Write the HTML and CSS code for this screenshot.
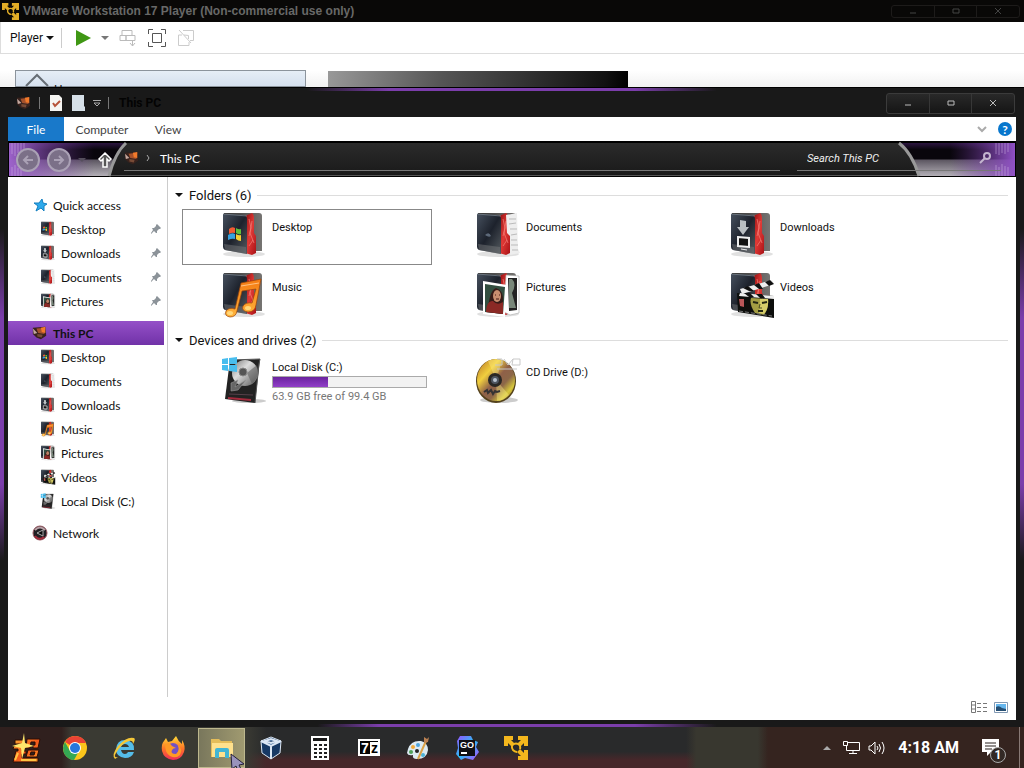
FILE: index.html
```html
<!DOCTYPE html>
<html lang="en">
  <head>
    <meta charset="utf-8">
    <title>This PC</title>
    <meta name="viewport" content="width=device-width, initial-scale=1">
    <link rel="stylesheet" href="styles.css">
  </head>
  <body>
    <!-- shared icons -->
    <svg class="sprite" width="0" height="0" aria-hidden="true">
      <defs>
        <linearGradient id="cover" x1="0" y1="0" x2="1" y2="1">
          <stop offset="0" stop-color="#46505e"/><stop offset=".5" stop-color="#1d222c"/><stop offset="1" stop-color="#555b60"/>
        </linearGradient>
        <linearGradient id="back"><stop offset="0" stop-color="#333"/><stop offset="1" stop-color="#767472"/></linearGradient>
        <linearGradient id="red" x1="0" y1="0" x2="1" y2="1">
          <stop offset="0" stop-color="#8e0e10"/><stop offset=".5" stop-color="#e03a36"/><stop offset="1" stop-color="#a81116"/>
        </linearGradient>
        <linearGradient id="gold" x1="0" y1="0" x2="0" y2="1"><stop offset="0" stop-color="#f47a12"/><stop offset="1" stop-color="#ffb53c"/></linearGradient>
        <linearGradient id="disc" x1="0" y1="0" x2="1" y2="1">
          <stop offset="0" stop-color="#b36c24"/><stop offset=".3" stop-color="#f1cf3e"/><stop offset=".5" stop-color="#8f6048"/><stop offset=".65" stop-color="#8c6748"/><stop offset=".8" stop-color="#d6c73c"/><stop offset="1" stop-color="#8c571d"/>
        </linearGradient>
        <linearGradient id="metal" x1="0" y1="0" x2="1" y2="1"><stop offset="0" stop-color="#777"/><stop offset=".4" stop-color="#ddd"/><stop offset="1" stop-color="#555"/></linearGradient>
        <linearGradient id="silver" x1="0" y1="0" x2="0" y2="1"><stop offset="0" stop-color="#2c1540"/><stop offset=".2" stop-color="#09060c"/><stop offset=".48" stop-color="#09060c"/><stop offset=".52" stop-color="#5d5762"/><stop offset="1" stop-color="#b4b0b7"/></linearGradient>
        <linearGradient id="violetL"><stop offset="0" stop-color="#9d62cb"/><stop offset="1" stop-color="#6b3397" stop-opacity="0"/></linearGradient>
        <linearGradient id="violetR"><stop offset="0" stop-color="#6b3397" stop-opacity="0"/><stop offset="1" stop-color="#8f50c4"/></linearGradient>
        <linearGradient id="fire" x1="0" y1="0" x2="0" y2="1"><stop offset="0" stop-color="#ffdc38"/><stop offset=".5" stop-color="#ff7a26"/><stop offset="1" stop-color="#ef2d58"/></linearGradient>
        <linearGradient id="go" x1="0" y1="0" x2="1" y2="1"><stop offset="0" stop-color="#9b4dff"/><stop offset=".5" stop-color="#2bbdf5"/><stop offset="1" stop-color="#b548ff"/></linearGradient>
        <linearGradient id="ember" x1="0" y1="0" x2="1" y2="1"><stop offset="0" stop-color="#ffae35"/><stop offset=".5" stop-color="#f4591b"/><stop offset="1" stop-color="#ff9d2b"/></linearGradient>
      </defs>

      <symbol id="folder" viewBox="0 0 46 48">
        <ellipse cx="23" cy="43" rx="21" ry="3" fill="#999" opacity=".3"/>
        <path d="M3 2L38 2Q41 2 41 5V40L30 40L3 36z" fill="url(#back)"/>
        <path d="M24 5L31 2Q33 3 33 8V22L35 25V42L31 44L24 42z" fill="url(#red)"/>
        <path d="M28 8L30 17L28 25M31 10L29 22L33 32M28 35L32 29" fill="none" stroke="#f57f78" stroke-width=".7"/>
        <path d="M2 3L23 4Q26 5 26 8V43L4 39Q2 38 2 36z" fill="url(#cover)"/>
        <path d="M2 3L26 5" stroke="#76808a" stroke-width=".8"/>
        <path d="M3 33L25 36V43L4 39z" fill="#737577" opacity=".5"/>
      </symbol>
      <symbol id="desktop" viewBox="0 0 46 48">
        <use href="#folder"/>
        <path d="M8 18Q11 15 14 17V22Q11 21 8 23z" fill="#f15b32"/><path d="M15 17Q18 19 20 18V23Q18 24 15 22z" fill="#5ebe3b"/>
        <path d="M7 24Q11 21 14 23V28Q11 27 7 29z" fill="#35a2df"/><path d="M15 23Q18 25 20 24V30Q17 30 15 28z" fill="#f5cf32"/>
      </symbol>
      <symbol id="documents" viewBox="0 0 46 48">
        <use href="#folder"/>
        <path d="M31 4L42 2L43 38L45 42L35 44V25L32 22z" fill="#eee"/>
        <path d="M34 8H41M34 13L41 12M35 18H42M36 24L42 23M36 29H42M36 34H43M37 39H43" stroke="#bbb"/>
        <path d="M10 24Q14 20 16 25Q14 27 10 24" fill="#5d6979"/>
      </symbol>
      <symbol id="downloads" viewBox="0 0 46 48">
        <use href="#folder"/>
        <path d="M11 9L17 10V16H20L14 24L8 16H11z" fill="#b9bec1"/>
        <path d="M9 26L20 27V36L9 35z" fill="#111" stroke="#eee" stroke-width="2"/><path d="M12 38L18 39" stroke="#eee"/>
      </symbol>
      <symbol id="music" viewBox="0 0 46 48">
        <use href="#folder"/>
        <path d="M20 12L40 8L35 34Q34 41 27 41Q20 40 22 35Q25 31 31 32L35 18L21 20L16 40Q15 46 9 46Q3 45 5 40Q8 36 14 38z" fill="url(#gold)" stroke="#9b430a" stroke-width=".7"/>
        <path d="M20 15L38 12" stroke="#ffc184"/><ellipse cx="9" cy="42" rx="3" ry="2" fill="#ffd77a"/><ellipse cx="27" cy="37" rx="3" ry="2" fill="#ffd77a"/>
      </symbol>
      <symbol id="pictures" viewBox="0 0 46 48">
        <use href="#folder"/>
        <path d="M31 4L44 5V42L35 44L29 41z" fill="#fff" stroke="#aaa" stroke-width=".6"/><path d="M33 7H42V39L34 40z" fill="#222"/><path d="M37 8Q42 13 37 22L41 37H34V8z" fill="#788779"/>
        <path d="M8 10L32 14L30 46L8 43z" fill="#fff"/><path d="M10 13L30 16L28 43L10 41z" fill="#324e40"/>
        <path d="M13 40Q14 20 21 17Q29 19 28 32L28 43L11 41z" fill="#371b18"/><ellipse cx="22" cy="25" rx="4" ry="6" fill="#c98e70"/><path d="M11 40Q12 29 18 30Q22 35 28 31V43L11 41z" fill="#8b2925"/><path d="M20 24H21M24 24H25M21 28H24" stroke="#451915"/>
      </symbol>
      <symbol id="videos" viewBox="0 0 46 48">
        <use href="#folder"/>
        <path d="M8 22L45 25V47L9 41z" fill="#0d0e0c"/><path d="M11 18L43 9L45 13L13 23z" fill="#eee"/><path d="M14 17L20 20H25L19 15zM25 14L30 18H34L30 12zM36 11L40 15L45 13L41 9z" fill="#111"/>
        <path d="M11 22L45 25V28L10 25z" fill="#eee"/><path d="M15 22L20 26H25L21 22zM27 23L31 27H36L33 23z" fill="#111"/>
        <path d="M22 27L39 28Q40 37 35 44L26 42Q20 33 22 27" fill="#a39d43"/><path d="M31 28L39 28Q40 37 35 43L30 42z" fill="#d6cd6a"/><path d="M24 31L29 32M33 32L38 31M29 40H34" stroke="#242713" stroke-width="2"/><path d="M31 33L30 37H33" fill="none" stroke="#4b4a20"/><path d="M10 28H15V36L11 35z" fill="#b95658"/><path d="M10 40L43 45" stroke="#777" stroke-dasharray="4 2"/>
      </symbol>
      <symbol id="drive" viewBox="0 0 46 48">
        <ellipse cx="28" cy="45" rx="17" ry="2" fill="#999" opacity=".5"/>
        <path d="M9 4L39 3L34 47L4 43z" fill="#222"/><path d="M9 4L39 3L38 8L34 47" fill="none" stroke="#555"/>
        <circle cx="24" cy="17" r="13" fill="url(#metal)"/><circle cx="22" cy="16" r="4" fill="#555" stroke="#888"/><path d="M26 17L36 9Q40 19 31 28z" fill="#555" opacity=".5"/>
        <path d="M10 27L17 24L14 31L25 24L17 34L10 35z" fill="#666" stroke="#999" stroke-width=".6"/><path d="M8 38L32 39" stroke="#55404a"/><path d="M7 42L30 44" stroke="#a32a3c" stroke-width="2"/>
        <path d="M1 3L7 2V8H1zM8 2L16 1V8H8zM1 9H7V15L1 14zM8 9H16V16L8 15z" fill="#48bdee"/>
      </symbol>
      <symbol id="cd" viewBox="0 0 46 48">
        <ellipse cx="24" cy="44" rx="19" ry="3" fill="#999" opacity=".5"/>
        <ellipse cx="21" cy="25" rx="20" ry="22" fill="#54421c"/><ellipse cx="21" cy="24" rx="19" ry="21" fill="url(#disc)"/>
        <path d="M21 24L13 5Q21 1 27 5zM21 24L34 39Q29 45 22 45z" fill="#fff087" opacity=".4"/>
        <circle cx="20" cy="24" r="7" fill="#292724"/><circle cx="20" cy="24" r="4" fill="#4d5560"/><circle cx="20" cy="24" r="2" fill="#b8c3cf"/>
        <path d="M9 36L12 34L13 37L16 34L18 38L20 35L22 36L25 35" fill="none" stroke="#333" stroke-width="2"/>
        <path d="M22 3H27V9H20M29 3L33 9L38 3M38 3H45V9H37zM22 13H42" fill="none" stroke="#c9c9c9"/>
      </symbol>
      <symbol id="pc" viewBox="0 0 18 16">
        <path d="M1 2L15 1L16 11L10 15L5 13L1 9z" fill="#38221d"/><path d="M5 3L15 2L14 9L7 8z" fill="#a6522c"/><path d="M10 2L15 1V8L11 7z" fill="#f17a2b"/><path d="M1 3L6 8L2 9z" fill="#c4a9a0"/><path d="M6 9L12 10L11 13L6 12z" fill="#784b36"/>
      </symbol>
      <symbol id="pin" viewBox="0 0 12 12"><path d="M7 1L11 5L10 6L9 6L7 8V10L6 10L4 8L1 11L1 10L3 7L2 5H4L6 3L6 2z" fill="#8c9399"/></symbol>
      <symbol id="vmware" viewBox="0 0 24 24">
        <path d="M0 0H9V4H7L11 8L8 11L4 7V10H0zM14 0H24V10H20V7L16 11L13 8L17 4H14zM24 14V24H14V20H17L13 16L16 13L20 17V14z" fill="currentColor"/>
        <path d="M8 10A5 5 0 0 0 13 16M16 13A5 5 0 0 0 16 10M10 8A5 5 0 0 1 14 8" fill="none" stroke="currentColor" stroke-width="2"/>
      </symbol>
    </svg>

    <section class="vm">
      <header class="vm-title">
        <svg class="vm-logo" viewBox="0 0 24 24"><use href="#vmware"/></svg>
        <h1>VMware Workstation 17 Player (Non-commercial use only)</h1>
        <div class="controls dim">
          <button aria-label="Minimize"><svg viewBox="0 0 10 10"><path d="M2 7H8"/></svg></button>
          <button aria-label="Maximize"><svg viewBox="0 0 10 10"><path d="M2 3H8V7H2z"/></svg></button>
          <button aria-label="Close"><svg viewBox="0 0 10 10"><path d="M2 2L8 8M8 2L2 8"/></svg></button>
        </div>
      </header>
      <nav class="vm-tools">
        <button class="player">Player <i class="caret"></i></button>
        <button class="play" aria-label="Play"><svg width="16" height="16" viewBox="0 0 16 16"><path d="M1 0L16 8L1 16z" fill="#3f9714"/></svg></button>
        <button class="more" aria-label="Power options"><i class="caret grey"></i></button>
        <button aria-label="Send keys"><svg width="18" height="18" viewBox="0 0 18 18" fill="none" stroke="#bbb"><path d="M3 1.500H13V6.500H3zM1 6.500H7V11.500H1zM7 6.500H16V11.500H7zM13.500 11V17M11 14L13.500 17L16 14"/></svg></button>
        <button aria-label="Full screen"><svg width="20" height="20" viewBox="0 0 20 20" fill="none" stroke="#555"><path d="M1.500 6V1.500H6M14 1.500H18.500V6M18.500 14V18.500H14M6 18.500H1.500V14M5.500 5.500H14.500V14.500H5.500z"/></svg></button>
        <button aria-label="Unity"><svg width="18" height="18" viewBox="0 0 18 18" fill="none" stroke="#ccc"><path d="M6 1.500H16.500V11.500H13M1.500 6V16.500H12V13M1.500 6H5M2 1L14 14M7 6L11.500 6.500V10"/></svg></button>
      </nav>
      <div class="vm-body">
        <div class="vm-home"><svg width="24" height="16" viewBox="0 0 24 16"><path d="M1 15L12 4L23 15" fill="none" stroke="#666d74" stroke-width="2"/></svg><span>Home</span></div>
        <div class="vm-banner"></div>
      </div>
    </section>

    <main class="explorer">
      <header class="titlebar">
        <svg class="pc" viewBox="0 0 18 16"><use href="#pc"/></svg>
        <i class="sep"></i>
        <button aria-label="Properties"><svg width="12" height="16" viewBox="0 0 12 16"><path d="M0 0H9L12 3V16H0z" fill="#f5f5f2"/><path d="M3 8L5 11L10 6" fill="none" stroke="#b65238" stroke-width="2"/></svg></button>
        <button class="new" aria-label="New folder"><svg width="13" height="16" viewBox="0 0 13 16"><path d="M0 0H12V11L13 12V16H0z" fill="#d6e0e8"/></svg></button>
        <button class="custom" aria-label="Customize"><svg width="8" height="8" viewBox="0 0 8 8"><path d="M0 1.500H8M1 4L4 7L7 4z" fill="none" stroke="#aaa"/></svg></button>
        <i class="sep"></i>
        <h2>This PC</h2>
        <div class="controls">
          <button aria-label="Minimize"><svg viewBox="0 0 10 10"><path d="M2 7H8"/></svg></button>
          <button aria-label="Maximize"><svg viewBox="0 0 10 10"><path d="M2 3H8V7H2z"/></svg></button>
          <button aria-label="Close"><svg viewBox="0 0 10 10"><path d="M2 2L8 8M8 2L2 8"/></svg></button>
        </div>
      </header>

      <nav class="tabs">
        <button class="file">File</button>
        <button class="computer">Computer</button>
        <button class="view">View</button>
        <button class="expand" aria-label="Expand ribbon"><svg width="10" height="6" viewBox="0 0 10 6"><path d="M1 1L5 5L9 1" fill="none" stroke="#aaa" stroke-width="2"/></svg></button>
        <button class="help" aria-label="Help">?</button>
      </nav>

      <div class="address">
        <svg class="deco" width="120" height="33" viewBox="0 0 120 33" aria-hidden="true">
          <path d="M0 0H117Q106 11 100 33H0z" fill="url(#silver)"/><path d="M0 0H85V33H0z" fill="url(#violetL)"/>
          <path d="M3 0V11M6 0V13M9 0V10M12 0V12M15 0V8M3 24V33M6 22V33M9 25V33M12 23V33" stroke="#d1b5e6" opacity=".5"/>
          <path d="M117 0Q106 10 100 33" fill="none" stroke="#999" stroke-width="3"/>
        </svg>
        <svg class="deco right" width="120" height="33" viewBox="0 0 120 33" aria-hidden="true">
          <path d="M4 0H120V33H24Q18 11 4 0z" fill="url(#silver)"/><path d="M55 0H120V33H55z" fill="url(#violetR)"/>
          <path d="M101 0V11M104 0V12M107 0V10M110 0V11M113 0V9M101 22V33M104 24V33M107 21V33M110 23V33M113 24V33" stroke="#d1b5e6" opacity=".5"/>
          <path d="M4 0Q17 10 24 33" fill="none" stroke="#999" stroke-width="3"/>
        </svg>
        <button class="orb" aria-label="Back"><svg width="12" height="12" viewBox="0 0 12 12"><path d="M11 6H2M6 2L2 6L6 10" fill="none" stroke="#aaa1b5" stroke-width="2"/></svg></button>
        <button class="orb" aria-label="Forward"><svg width="12" height="12" viewBox="0 0 12 12"><path d="M1 6H10M6 2L10 6L6 10" fill="none" stroke="#aaa1b5" stroke-width="2"/></svg></button>
        <button class="recent" aria-label="Recent locations"><i class="caret"></i></button>
        <button class="up" aria-label="Up"><svg width="14" height="16" viewBox="0 0 14 16"><path d="M7 1L13 7L11 9L9 7V15H5V7L3 9L1 7z" fill="#555" stroke="#fff" stroke-width="1.500"/></svg></button>
        <div class="path">
          <svg class="pc" viewBox="0 0 18 16"><use href="#pc"/></svg>
          <svg width="4" height="6" viewBox="0 0 4 6"><path d="M1 0L3 3L1 6" fill="none" stroke="#aaa"/></svg>
          <a href="#">This PC</a>
        </div>
        <label class="search">
          <input type="text" placeholder="Search This PC" aria-label="Search This PC">
          <svg width="12" height="12" viewBox="0 0 12 12" fill="none" stroke="#c4b5cf" stroke-width="2"><circle cx="8" cy="4" r="3"/><path d="M6 6L1 11"/></svg>
        </label>
      </div>

      <div class="pane">
        <aside class="tree">
          <a href="#" class="root"><svg viewBox="0 0 16 16"><path d="M10 2L11 6L15 7L12 9L12 14L9 11L4 14L6 9L2 6L7 6z" fill="#2da9eb" stroke="#1680c0"/></svg>Quick access</a>
          <a href="#"><svg viewBox="0 0 46 48"><use href="#desktop"/></svg>Desktop<svg class="pin" viewBox="0 0 12 12"><use href="#pin"/></svg></a>
          <a href="#"><svg viewBox="0 0 46 48"><use href="#downloads"/></svg>Downloads<svg class="pin" viewBox="0 0 12 12"><use href="#pin"/></svg></a>
          <a href="#"><svg viewBox="0 0 46 48"><use href="#documents"/></svg>Documents<svg class="pin" viewBox="0 0 12 12"><use href="#pin"/></svg></a>
          <a href="#"><svg viewBox="0 0 46 48"><use href="#pictures"/></svg>Pictures<svg class="pin" viewBox="0 0 12 12"><use href="#pin"/></svg></a>
          <a href="#" class="root group active"><svg viewBox="0 0 18 16"><use href="#pc"/></svg>This PC</a>
          <a href="#"><svg viewBox="0 0 46 48"><use href="#desktop"/></svg>Desktop</a>
          <a href="#"><svg viewBox="0 0 46 48"><use href="#documents"/></svg>Documents</a>
          <a href="#"><svg viewBox="0 0 46 48"><use href="#downloads"/></svg>Downloads</a>
          <a href="#"><svg viewBox="0 0 46 48"><use href="#music"/></svg>Music</a>
          <a href="#"><svg viewBox="0 0 46 48"><use href="#pictures"/></svg>Pictures</a>
          <a href="#"><svg viewBox="0 0 46 48"><use href="#videos"/></svg>Videos</a>
          <a href="#"><svg viewBox="0 0 46 48"><use href="#drive"/></svg>Local Disk (C:)</a>
          <a href="#" class="root group"><svg viewBox="0 0 16 16"><circle cx="8" cy="8" r="7" fill="#211f23" stroke="#98565f"/><path d="M3 5Q8 0 13 5" fill="none" stroke="#b8a0a6" stroke-width="2"/><path d="M5 8L11 5V11z" fill="#09090a" stroke="#aaa"/><path d="M3 11Q7 16 12 12" fill="none" stroke="#a72a3a" stroke-width="2"/></svg>Network</a>
        </aside>

        <section class="files">
          <h3><i class="caret"></i>Folders (6)</h3>
          <div class="grid">
            <a href="#" class="tile selected"><svg viewBox="0 0 46 48"><use href="#desktop"/></svg><span>Desktop</span></a>
            <a href="#" class="tile"><svg viewBox="0 0 46 48"><use href="#documents"/></svg><span>Documents</span></a>
            <a href="#" class="tile"><svg viewBox="0 0 46 48"><use href="#downloads"/></svg><span>Downloads</span></a>
            <a href="#" class="tile"><svg viewBox="0 0 46 48"><use href="#music"/></svg><span>Music</span></a>
            <a href="#" class="tile"><svg viewBox="0 0 46 48"><use href="#pictures"/></svg><span>Pictures</span></a>
            <a href="#" class="tile"><svg viewBox="0 0 46 48"><use href="#videos"/></svg><span>Videos</span></a>
          </div>
          <h3 class="drives-head"><i class="caret"></i>Devices and drives (2)</h3>
          <div class="grid">
            <a href="#" class="tile drive">
              <svg viewBox="0 0 46 48"><use href="#drive"/></svg>
              <span class="info">Local Disk (C:)
                <span class="usage"><span class="used" style="width: 36%"></span></span>
                <small>63.9 GB free of 99.4 GB</small>
              </span>
            </a>
            <a href="#" class="tile"><svg viewBox="0 0 46 48"><use href="#cd"/></svg><span>CD Drive (D:)</span></a>
          </div>
          <footer class="views">
            <button aria-label="Details"><svg width="16" height="12" viewBox="0 0 16 12" fill="none" stroke="#777"><path d="M.500 .500H4.500V11.500H.500zM0 4H5M0 8H5M6 2.500H10M12 2.500H16M6 6.500H10M12 6.500H16M6 10.500H10M12 10.500H16"/></svg></button>
            <button aria-label="Large icons"><svg width="14" height="11" viewBox="0 0 14 11"><path d="M.500 .500H13.500V10.500H.500z" fill="#fff" stroke="#8199b3"/><path d="M2 2H12V9H2z" fill="#65b6ed"/><path d="M2 5Q5 3 8 6L12 7V9H2z" fill="#254e72"/></svg></button>
          </footer>
        </section>
      </div>
    </main>

    <footer class="taskbar">
      <button aria-label="Start"><svg width="28" height="30" viewBox="0 0 28 30"><path d="M3 7H12V11H3zM2 13H13V16H10V18H14V21H10V25H26V29H1L4 18H6V16H1zM15 6H28L26 15H21V12H23V9H19L18 15H14zM16 17H27L25 24H14zM19 19L18 22H22L23 19z" fill="url(#ember)" fill-rule="evenodd" stroke="#2b0d05"/><path d="M6 20L3 27M9 27H24" stroke="#ffc445" stroke-width="2"/><path d="M12 0L13 10L22 13L13 15L10 26L9 15L0 13L10 10z" fill="#ffe66b"/></svg></button>
      <button aria-label="Chrome"><svg width="24" height="24" viewBox="0 0 24 24"><circle cx="12" cy="12" r="12" fill="#fbc51b"/><path d="M12 12L2 6Q5 0 12 0Q20 0 23 7H12z" fill="#e94335"/><path d="M12 12L7 15L2 6Q-2 12 2 19Q6 24 11 24L16 15z" fill="#34a853"/><circle cx="12" cy="12" r="6" fill="#fff"/><circle cx="12" cy="12" r="5" fill="#2777dd"/></svg></button>
      <button aria-label="Internet Explorer"><svg width="24" height="24" viewBox="0 0 24 24"><path d="M22 16Q20 22 13 22Q4 21 4 13Q5 4 13 4Q23 5 22 14H9Q10 18 13 18Q15 18 16 16zM9 11H17Q16 8 13 8Q10 8 9 11" fill="#55bde9" fill-rule="evenodd"/><path d="M3 23Q-1 19 6 10Q15 0 22 2Q24 3 21 8Q21 4 17 5Q10 7 4 17Q1 22 6 21z" fill="#f4c738"/></svg></button>
      <button aria-label="Firefox"><svg width="24" height="24" viewBox="0 0 24 24"><path d="M3 5L5 2L7 6L11 5L15 0Q17 5 21 8L21 4Q25 10 23 16Q20 24 12 24Q3 23 1 15Q0 8 3 5" fill="url(#fire)"/><circle cx="12" cy="13" r="6" fill="#7351c4"/><path d="M4 8Q9 6 11 10L15 12Q12 12 11 14Q9 18 15 18Q19 15 17 9Q22 13 19 19Q15 23 9 20Q4 17 4 8" fill="#ff9a25"/></svg></button>
      <button class="running" aria-label="File Explorer"><svg width="24" height="22" viewBox="0 0 24 22"><path d="M1 2H9L11 4H22V20H1z" fill="#e5bd59"/><path d="M2 6H23V20H2z" fill="#ffe18d"/><path d="M5 21V13Q5 11 7 11H17Q19 11 19 13V21H15V15H9V21z" fill="#42b5d4"/></svg>
        <svg class="pointer" width="16" height="18" viewBox="0 0 16 18"><path d="M1 1L14 11L9 12L12 18H8L6 13L2 16z" fill="#9993bc" stroke="#252039"/></svg></button>
      <button aria-label="VirtualBox"><svg width="22" height="24" viewBox="0 0 22 24" stroke="#dce7f5"><path d="M11 1L21 5L20 17L11 23L2 17L1 5z" fill="#173965"/><path d="M1 5L11 10L21 5M11 10V23M5 5L11 3L17 5L11 7z" fill="#28558c" stroke-width="2"/></svg></button>
      <button aria-label="Calculator"><svg width="18" height="24" viewBox="0 0 18 24"><path d="M0 0H18V24H0z" fill="#fff"/><path d="M2 2H16V5H2z" fill="#171717"/><path d="M3 9H6M8 9H11M13 9H16M3 13H6M8 13H11M13 13H16M3 17H6M8 17H11M13 17H16M3 21H6M8 21H11M13 21H16" stroke="#222" stroke-width="2"/></svg></button>
      <button aria-label="7-Zip"><svg width="22" height="17" viewBox="0 0 22 17"><path d="M1 1H21V16H1z" fill="#050505" stroke="#fff" stroke-width="2"/><path d="M12 3H20V15H12z" fill="#fff"/><text x="3" y="14" fill="#fff" class="zip">7</text><text x="13" y="14" class="zip">z</text></svg></button>
      <button aria-label="Paint"><svg width="24" height="24" viewBox="0 0 24 24"><path d="M2 13Q5 4 15 5Q22 7 22 14Q21 23 11 23Q6 23 7 19Q2 20 1 17z" fill="#dceaf2"/><circle cx="7" cy="11" r="2" fill="#f1a938"/><circle cx="12" cy="9" r="2" fill="#4fa5dc"/><circle cx="5" cy="16" r="2" fill="#4fa15a"/><circle cx="17" cy="19" r="2" fill="#4db3d8"/><circle cx="11" cy="15" r="2" fill="#222"/><path d="M20 5L12 23" stroke="#dba248" stroke-width="2"/><path d="M18 1L21 3L23 1L22 6L18 7z" fill="#ba8052"/></svg></button>
      <button aria-label="GoLand"><svg width="24" height="24" viewBox="0 0 24 24"><path d="M5 0H16L18 4L23 6L21 11L24 16L18 24L10 22L6 24L1 18L3 12L2 5z" fill="url(#go)"/><path d="M4 4H20V20H4z" fill="#101014"/><text x="5" y="12" class="go">GO</text><path d="M6 17H12" stroke="#fff" stroke-width="2"/></svg></button>
      <button class="gold" aria-label="VMware"><svg width="24" height="24" viewBox="0 0 24 24"><use href="#vmware"/></svg></button>
      <div class="tray">
        <button aria-label="Show hidden icons"><svg width="8" height="4" viewBox="0 0 8 4"><path d="M0 4L4 0L8 4z" fill="#aaa"/></svg></button>
        <button aria-label="Network"><svg width="17" height="15" viewBox="0 0 17 15" fill="none" stroke="#fff"><path d="M5 2.500H16.500V10.500H3.500V5M10 11V13.500M6 13.500H14M.500 1.500H4.500V5.500H.500z"/></svg></button>
        <button aria-label="Volume"><svg width="17" height="14" viewBox="0 0 17 14" fill="none" stroke="#fff"><path d="M1 5V9H3L7 13V1L3 5zM9 5Q11 7 9 9M11 3Q14 7 11 11M14 1Q18 7 14 13"/></svg></button>
        <time>4:18 AM</time>
        <button class="notify" aria-label="Notifications"><svg width="18" height="18" viewBox="0 0 18 18"><path d="M0 0H17V13H9L5 17V13H0z" fill="#fff"/><path d="M3 4H14M3 7H14M3 10H10" stroke="#29211f"/></svg><span>1</span></button>
      </div>
    </footer>
  </body>
</html>
```
FILE: styles.css
```css
* {
  box-sizing: border-box;
}

body {
  margin: 0;
  min-height: 100vh;
  display: flex;
  flex-direction: column;
  background: #fff;
  color: #111;
  font-family: Roboto, "Liberation Sans", sans-serif;
  font-size: 12px;
}

.sprite {
  position: absolute;
}

svg {
  flex-shrink: 0;
  overflow: visible;
}

button {
  display: flex;
  align-items: center;
  justify-content: center;
  padding: 0;
  border: 0;
  background: none;
  color: inherit;
  font: inherit;
}

a {
  color: inherit;
  text-decoration: none;
}

h1, h2, h3 {
  margin: 0;
}

.caret {
  border: 4px solid transparent;
  border-top-color: currentColor;
  border-bottom: 0;
}

.grey {
  color: #777;
}

/* VMware window behind */
.vm-title {
  display: flex;
  align-items: center;
  gap: 4px;
  height: 22px;
  padding: 0 4px 0 2px;
  background: #090807;
}

.vm-title h1 {
  color: #686868;
  font: bold 12px "Liberation Sans", sans-serif;
}

.vm-logo {
  width: 17px;
  height: 17px;
  color: #e2ad27;
}

.controls {
  display: flex;
  width: 129px;
  height: 21px;
  margin-left: auto;
  border: 1px solid #3b3b3b;
  border-radius: 3px;
  background: linear-gradient(#292929, #151515);
}

.controls button {
  flex: 1;
}

.controls button + button {
  border-left: 1px solid #373737;
}

.controls svg {
  width: 10px;
  height: 10px;
  fill: none;
  stroke: #bbb;
}

.controls.dim {
  height: 13px;
  border-color: #1d1b1a;
  background: #090807;
}

.controls.dim button {
  border-color: #1d1b1a;
}

.controls.dim svg {
  stroke: #444;
}

.vm-tools {
  display: flex;
  align-items: center;
  height: 32px;
  padding-left: 9px;
  gap: 10px;
  border-bottom: 1px solid #ddd;
  border-left: 1px solid #ddd;
}

.player {
  gap: 3px;
  height: 20px;
  padding-right: 7px;
  margin-right: 3px;
  border-right: 1px solid #ccc;
}

.vm-body {
  display: flex;
  gap: 22px;
  height: 33px;
  padding: 16px 15px 0;
  background: linear-gradient(#fff 50%, #f1f1f1);
  overflow: hidden;
}

.vm-home {
  display: flex;
  align-items: flex-start;
  gap: 5px;
  width: 291px;
  padding-left: 9px;
  border: 1px solid #8c949c;
  background: linear-gradient(#e6eef6, #d5e0ee);
}

.vm-home span {
  padding-top: 12px;
}

.vm-banner {
  width: 300px;
  margin-top: 1px;
  background: linear-gradient(100deg, #999, #555 38%, #111 92%, #000);
}

/* Explorer window */
.explorer {
  flex: 1;
  display: flex;
  flex-direction: column;
  padding: 1px 8px 7px;
  border-top: 1px solid #000;
  background:
    linear-gradient(90deg, transparent 30%, #7b3eab 38%, #7b3eab 62%, transparent 70%) top / 100% 3px no-repeat,
    linear-gradient(90deg, transparent 31%, #7b3eab 37%, #7b3eab 62%, transparent 70%) bottom / 100% 3px no-repeat,
    linear-gradient(transparent 22%, #7b3eab 36%, #7b3eab 62%, transparent 74%) left / 4px 100% no-repeat,
    linear-gradient(transparent 22%, #7b3eab 36%, #7b3eab 62%, transparent 74%) right / 4px 100% no-repeat,
    #191919;
}

.titlebar {
  display: flex;
  align-items: center;
  height: 28px;
  padding: 0 1px 0 8px;
}

.pc {
  width: 16px;
  height: 14px;
}

.sep {
  width: 2px;
  height: 12px;
  margin: 0 9px 0 7px;
  border-left: 1px solid #777;
}

.new {
  margin-left: 10px;
}

.custom {
  margin-left: 8px;
}

.titlebar h2 {
  color: #030303;
  font-weight: bold;
  font-size: 12px;
}

.tabs {
  display: flex;
  height: 24px;
  background: #fff;
  color: #444;
  font-family: Lato, sans-serif;
}

.file {
  width: 56px;
  background: #1979ca;
  color: #fff;
}

.computer {
  width: 76px;
}

.view {
  width: 56px;
}

.expand {
  margin-left: auto;
  margin-right: 11px;
}

.help {
  width: 14px;
  height: 14px;
  margin: 5px 4px 0 0;
  border-radius: 50%;
  background: #0877cd;
  color: #fff;
  font-weight: bold;
}

.address {
  position: relative;
  display: flex;
  align-items: center;
  height: 36px;
  border: 1px solid #000;
  border-top-width: 2px;
  background: linear-gradient(#2b2b2b, #191919);
  color: #fff;
  box-shadow: inset 0 -1px #555;
}

.deco {
  position: absolute;
  top: 0;
  left: 0;
}

.deco.right {
  left: auto;
  right: 0;
}

.orb {
  position: relative;
  width: 24px;
  height: 24px;
  margin-left: 7px;
  border: 2px solid #aaa1b5;
  border-radius: 50%;
  background: #7b7088;
}

.recent {
  position: relative;
  margin-left: 7px;
  color: #554e5c;
}

.up {
  position: relative;
  margin-left: 12px;
}

.path, .search {
  position: relative;
  display: flex;
  align-items: center;
  height: 24px;
  border-bottom: 1px solid #777;
}

.path {
  flex: 1;
  gap: 6px;
  margin: 0 17px 2px 12px;
}

.path a {
  margin-left: 4px;
  font-family: Lato, sans-serif;
}

.search {
  width: 204px;
  margin: 0 14px 2px 0;
  padding: 0 10px;
}

.search input {
  min-width: 0;
  flex: 1;
  padding: 0;
  border: 0;
  outline: 0;
  background: none;
  color: #fff;
  font: italic 11px Roboto, "Liberation Sans", sans-serif;
}

.search input::placeholder {
  color: #eee;
}

.pane {
  flex: 1;
  display: flex;
  background: #fff;
}

.tree {
  width: 160px;
  margin-bottom: 23px;
  padding: 16px 3px 0 0;
  border-right: 1px solid #ccc;
  font-family: Lato, sans-serif;
}

.tree a {
  display: flex;
  align-items: center;
  gap: 5px;
  height: 24px;
  padding-left: 32px;
}

.tree svg {
  width: 16px;
  height: 16px;
}

.tree .root {
  padding-left: 24px;
}

.tree .group {
  margin-top: 8px;
}

.tree .active {
  background: linear-gradient(#9550c8, #7132a8);
  font-weight: bold;
}

.tree .pin {
  width: 12px;
  height: 12px;
  margin-left: auto;
  margin-right: 2px;
}

.files {
  flex: 1;
  display: flex;
  flex-direction: column;
  padding: 8px 8px 7px 7px;
}

.files h3 {
  display: flex;
  align-items: center;
  gap: 6px;
  height: 20px;
  font-weight: normal;
  font-size: 13px;
}

.files h3::after {
  content: "";
  flex: 1;
  height: 1px;
  background: #ddd;
}

.files .drives-head {
  margin-top: 5px;
}

.grid {
  display: grid;
  grid-template-columns: repeat(auto-fill, 250px);
  gap: 4px;
  padding: 4px 0 0 7px;
}

.tile {
  display: flex;
  gap: 5px;
  height: 56px;
  padding: 0 4px 0 38px;
  border: 1px solid transparent;
  font-size: 11px;
  line-height: 14px;
}

.tile.selected {
  border-color: #888;
}

.tile > svg {
  width: 46px;
  height: 48px;
  margin-top: 1px;
}

.tile > span {
  padding-top: 11px;
}

.tile > .info {
  flex: 1;
  padding-top: 6px;
}

.usage {
  display: block;
  height: 12px;
  margin: 1px 0 2px;
  border: 1px solid #aaa;
  background: #f2f2f2;
}

.used {
  display: block;
  height: 10px;
  background: linear-gradient(#6a239e, #9140c8);
}

small {
  color: #777;
  font-size: 11px;
}

.views {
  display: flex;
  justify-content: flex-end;
  gap: 7px;
  margin-top: auto;
}

/* Taskbar */
.taskbar {
  display: flex;
  height: 41px;
  padding-left: 1px;
  background:
    linear-gradient(90deg, transparent 67%, #38372f 68%, #38372f 74%, transparent 75%),
    linear-gradient(90deg, #30201e 6%, #3a3a33 7%, #3a3a33 24%, transparent 26%, transparent 67%, #35241f 75%),
    linear-gradient(#292a2b 60%, #46272a 80%);
}

.taskbar > button {
  position: relative;
  width: 49px;
}

.taskbar .running {
  width: 47px;
  margin: 1px 1px 0;
  border: 1px solid #bdb88e;
  background: linear-gradient(90deg, #79775c, #a09a70);
}

/* mouse pointer over the running button */
.pointer {
  position: absolute;
  right: -2px;
  bottom: -4px;
}

.gold {
  color: #f4b71d;
}

.zip {
  font: bold 14px "Liberation Sans", sans-serif;
}

.go {
  fill: #fff;
  font: bold 9px "Liberation Sans", sans-serif;
}

.tray {
  display: flex;
  align-items: center;
  gap: 8px;
  margin: 0 4px 0 auto;
  padding-right: 14px;
  border-right: 1px solid #887975;
  color: #fff;
}

.tray button:first-child {
  margin-right: 4px;
}

.tray time {
  margin-left: 5px;
  font-weight: bold;
  font-size: 16px;
}

.notify {
  position: relative;
  margin: 0 5px 0 15px;
}

.notify span {
  position: absolute;
  left: 8px;
  top: 8px;
  width: 16px;
  border: 1px solid #aaa;
  border-radius: 50%;
  background: #332925;
  font-weight: bold;
}
```
